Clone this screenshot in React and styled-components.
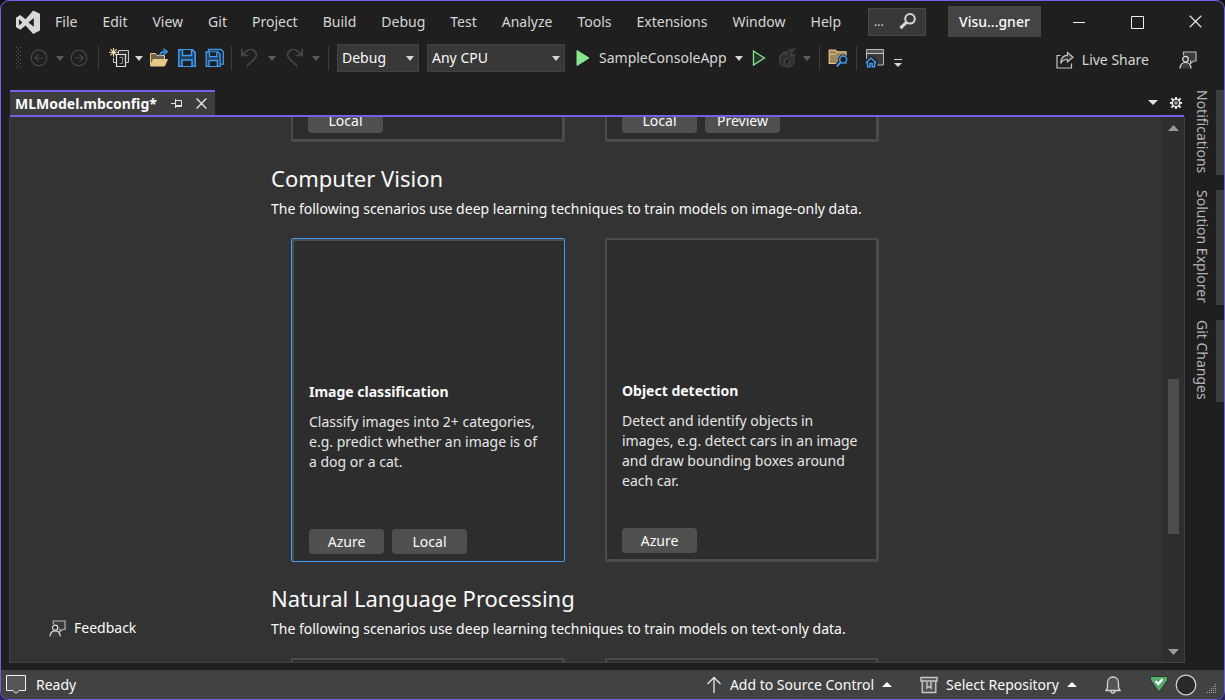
import React from "react";
import styled, { createGlobalStyle, css } from "styled-components";

const c = {
  chrome: "#1f1f1f",
  panel: "#333333",
  card: "#2d2d2d",
  edge: "#4b4b4b",
  field: "#383838",
  status: "#424242",
  purple: "#7160e8",
  blue: "#3f9cf5",
  green: "#89e58b",
  sand: "#e8c888",
  text: "#fafafa",
  soft: "#d6d6d6",
  dim: "#464646",
  dimCaret: "#5c5c5c",
};

const GlobalStyle = createGlobalStyle`
  * { box-sizing: border-box; }
  html, body { margin: 0; height: 100%; }
  body {
    background: linear-gradient(#101014 50%, #2b2760);
    font-family: "Noto Sans", "Open Sans", sans-serif;
    font-size: 14px;
    line-height: 20px;
    color: ${c.text};
  }
  button, select, input { font: inherit; color: inherit; }
  svg { display: block; flex: none; }
`;

const Window = styled.div`
  display: flex;
  flex-direction: column;
  height: 100vh;
  min-height: 400px;
  overflow: hidden;
  background: ${c.chrome};
  border: 1px solid ${c.purple};
  border-radius: 9px;
`;

const PlainButton = styled.button`
  display: flex;
  flex: none;
  align-items: center;
  justify-content: center;
  padding: 0;
  border: 0;
  background: none;
  white-space: nowrap;
`;

/* Title bar */
const TitleBar = styled.header`
  display: flex;
  flex: none;
  align-items: center;
  height: 43px;
  padding: 0 0 2px 14px;
`;

const Menu = styled.nav`
  display: flex;
  gap: 25px;
  margin: 0 27px 0 14px;
  color: ${c.soft};
`;

const SearchBox = styled.label`
  display: flex;
  align-items: center;
  justify-content: space-between;
  width: 58px;
  height: 28px;
  padding: 0 9px 0 5px;
  background: ${c.field};
  border: 1px solid #484848;
  color: ${c.soft};
`;

const SearchInput = styled.input`
  width: 16px;
  padding: 0;
  border: 0;
  outline: 0;
  background: none;
  font-size: 12px;
  &::placeholder { color: ${c.soft}; opacity: 1; }
`;

const SolutionName = styled(PlainButton)`
  height: 31px;
  margin-left: 22px;
  padding: 0 11px;
  background: #444444;
  font-weight: 500;
`;

const WindowButtons = styled.div`
  display: flex;
  margin-left: auto;
`;

const WindowButton = styled(PlainButton)`
  width: 58px;
  height: 41px;
`;

/* Toolbar */
const Toolbar = styled.div`
  display: flex;
  flex: none;
  align-items: center;
  gap: 8px;
  height: 28px;
  padding: 0 27px 0 15px;
  color: ${c.soft};
`;

const ToolGroup = styled.div`
  display: flex;
  align-items: center;
  gap: ${(p) => p.$gap || 6}px;
`;

const Divider = styled.span`
  flex: none;
  width: 1px;
  height: 24px;
  margin: 0 ${(p) => (p.$wide ? 2 : 0)}px;
  background: #3d3d3d;
`;

const SelectBox = styled.label`
  display: grid;
  align-items: center;
  width: ${(p) => p.$width}px;
  height: 28px;
  & > * { grid-area: 1 / 1; }
  & > svg { justify-self: end; margin-right: 5px; pointer-events: none; }
`;

const Select = styled.select`
  width: 100%;
  height: 100%;
  padding: 0 4px;
  appearance: none;
  border: 1px solid #424242;
  border-radius: 0;
  background: ${c.field};
  color: ${c.text};
`;

const ShareGroup = styled.div`
  display: flex;
  gap: 30px;
  margin-left: auto;
  padding-top: 4px;
`;

const LabelButton = styled(PlainButton)`
  gap: ${(p) => p.$gap || 8}px;
`;

/* Document area */
const Workspace = styled.div`
  display: flex;
  flex: 1;
  min-height: 0;
  padding: 18px 0 7px 8px;
`;

const DocumentColumn = styled.main`
  display: flex;
  flex: 1;
  flex-direction: column;
  min-width: 0;
`;

const TabStrip = styled.div`
  display: flex;
  flex: none;
  align-items: stretch;
  justify-content: space-between;
  height: 27px;
  margin: 0 1px;
  border-bottom: 2px solid ${c.purple};
`;

const DocumentTab = styled.div`
  display: flex;
  align-items: center;
  gap: 14px;
  padding: 0 8px 0 5px;
  border-top: 2px solid ${c.purple};
  background: #3d3d3d;
  font-weight: 700;
`;

const TabTools = styled.div`
  display: flex;
  align-items: center;
  gap: 12px;
  padding-right: 2px;
`;

const Panel = styled.div`
  display: flex;
  flex: 1;
  min-height: 0;
  border: 1px solid #404040;
  border-top: 0;
  background: ${c.panel};
`;

const PageGrid = styled.div`
  display: grid;
  flex: 1;
  grid-template-columns: 1fr minmax(0, 631px) 1fr;
  grid-template-rows: 100%;
  min-width: 0;
`;

const FeedbackArea = styled.aside`
  display: flex;
  align-items: flex-end;
  padding: 0 0 24px 39px;
`;

const Scenarios = styled.div`
  display: flex;
  flex-direction: column;
  gap: 22px;
  overflow: hidden;
`;

const SectionTitle = styled.h2`
  margin: 0 0 7px;
  font-size: 22px;
  line-height: 28px;
  font-weight: 400;
`;

const SectionText = styled.p`
  margin: 0 0 19px;
`;

const CardRow = styled.div`
  display: flex;
  flex: none;
  gap: 40px;
  padding: 0 20px;
  ${(p) =>
    p.$scrolledOut &&
    css`
      align-items: flex-end;
      height: 25px;
      overflow: hidden;
    `}
`;

const Card = styled.button`
  display: flex;
  flex: none;
  flex-direction: column;
  width: 274px;
  height: 324px;
  padding: 141px 14px 6px 15px;
  border: 2px solid ${c.edge};
  border-right-width: 3px;
  border-bottom-width: 3px;
  border-radius: 2px;
  background: ${c.card};
  text-align: left;
  ${(p) =>
    p.$selected &&
    css`
      padding: 143px 18px 7px 17px;
      border: 1px solid ${c.blue};
      box-shadow: inset 1px 1px 0 1px ${c.edge};
    `}
`;

const CardTitle = styled.span`
  margin-bottom: 10px;
  font-weight: 700;
`;

const CardText = styled.span`
  color: #e6e6e6;
`;

const Tags = styled.span`
  display: flex;
  gap: 8px;
  margin-top: auto;
`;

const Tag = styled.span`
  width: 75px;
  padding: 3px 0 2px;
  border-radius: 4px;
  background: #505050;
  text-align: center;
`;

const ScrollBar = styled.div`
  display: flex;
  flex: none;
  flex-direction: column;
  align-items: center;
  width: 21px;
  padding: 8px 0 7px;
  background: #2e2e2e;
`;

const ScrollTrack = styled.div`
  display: flex;
  flex: 1;
  flex-direction: column;
`;

const ScrollThumb = styled.div`
  flex: 154;
  width: 11px;
  background: #4d4d4d;
`;

const ScrollSpace = styled.div`
  flex: ${(p) => p.$share};
`;

/* Side tabs */
const SideTabs = styled.aside`
  display: flex;
  flex: none;
  flex-direction: column;
  gap: 15px;
  padding-left: 7px;
`;

const SideTab = styled.button`
  width: 32px;
  padding: 0 4px 2px 0;
  border: 0;
  border-right: 8px solid #3d3d3d;
  background: none;
  color: #b4b4b4;
  line-height: 20px;
  writing-mode: vertical-rl;
  text-align: left;
  white-space: nowrap;
`;

/* Status bar */
const StatusBar = styled.footer`
  display: flex;
  flex: none;
  align-items: center;
  height: 29px;
  padding: 0 6px 0 5px;
  background: ${c.status};
`;

const StatusEnd = styled.div`
  display: flex;
  align-items: center;
  gap: 28px;
  margin-left: auto;
`;

const StatusGroup = styled.div`
  display: flex;
  align-items: center;
  gap: ${(p) => p.$gap}px;
`;

/* Icons */
const Svg = ({ w = 20, h = 20, children, ...rest }) => (
  <svg width={w} height={h} viewBox={`0 0 ${w} ${h}`} fill="none" stroke="currentColor" aria-hidden="true" {...rest}>
    {children}
  </svg>
);

const Caret = ({ color = c.soft, up, w = 8, h = 5 }) => (
  <Svg w={w} h={h} stroke="none" fill={color}>
    <path d={up ? `M0 ${h}L${w / 2} 0L${w} ${h}Z` : `M0 0H${w}L${w / 2} ${h}Z`} />
  </Svg>
);

const Logo = () => (
  <Svg w={26} h={26} stroke="none" fill="#d8d8d8">
    <path fillRule="evenodd" d="M1 8.7L5.2 6L10.6 10.3L18.2 1.4L25 4.8V21.6L18.2 25L10.6 16.5L5.2 20.8L1 18ZM4 10.3V16.4L7.4 13.4ZM13.4 13.4L18.8 17.8V9Z" />
  </Svg>
);

const Magnifier = () => (
  <Svg w={17} h={17}>
    <circle cx="11" cy="5.8" r="4.8" strokeWidth="2" />
    <path d="M7.4 9.4L1.4 15.2" strokeWidth="3" />
  </Svg>
);

const Grip = () => (
  <Svg w={6} h={22} stroke="none" fill="#5a5a5a">
    {[0, 4, 8, 12, 16, 20].map((y) => (
      <g key={y}>
        <rect x="0" y={y} width="1" height="1" />
        <rect x="4" y={y} width="1" height="1" />
        {y < 20 && <rect x="2" y={y + 2} width="1" height="1" />}
      </g>
    ))}
  </Svg>
);

const CircleArrow = ({ right }) => (
  <Svg w={18} h={18} stroke={c.dim} strokeWidth="1.2">
    <circle cx="9" cy="9" r="7.8" />
    <path d={right ? "M4.5 9H13M9.5 5.3L13.2 9L9.5 12.7" : "M13.5 9H5M8.5 5.3L4.8 9L8.5 12.7"} />
  </Svg>
);

const NewProject = () => (
  <Svg>
    <path d="M9.5 7V2.5H19.5V14.5H16.5" fill="#303030" stroke="#c4c4c4" />
    <path d="M4.5 10V14.5H7.5" stroke="#c4c4c4" />
    <path d="M7.5 6.5H16.5V18.5H7.5Z" stroke="#e0e0e0" strokeWidth="1.2" />
    <path d="M10.5 9.5H13.5V15.5H10.5" stroke="#8a8a8a" />
    <path d="M4.5 -.2V8.8M0 4.3H9M1.4 1.2L7.6 7.4M7.6 1.2L1.4 7.4" stroke="#ead9ad" strokeWidth="1.1" />
  </Svg>
);

const OpenFolder = () => (
  <Svg>
    <path d="M1.5 17V5.5H6.5L8 7.5H15.5V11" stroke={c.sand} fill="#6f6247" />
    <path d="M1.5 18L4.2 11.5H18.5L15.5 18Z" fill={c.sand} stroke={c.sand} />
    <path d="M10.8 8.5Q10.8 3.7 16.5 3.7" stroke={c.blue} strokeWidth="1.8" />
    <path d="M14.3 .7L18.3 3.7L14.3 6.8" stroke={c.blue} strokeWidth="1.4" />
  </Svg>
);

const Save = () => (
  <Svg stroke={c.blue} strokeWidth="1.5">
    <path d="M1.8 1.8H15.5L18.2 4.5V18.2H1.8Z" fill="#24405c" />
    <path d="M5.5 2V7.5H14.5V2M5 18V12H15V18" fill={c.chrome} />
  </Svg>
);

const SaveAll = () => (
  <Svg stroke={c.blue} strokeWidth="1.3">
    <path d="M3.5 3.2V1.5H16L18.3 3.8V16.2H16" />
    <path d="M1.2 4H13L15.2 6.2V18.3H1.2Z" fill="#24405c" />
    <path d="M4.5 4.2V8.7H11.8V4.2M4 18V12.5H12.3V18" fill={c.chrome} />
  </Svg>
);

const Turn = ({ flip }) => (
  <Svg w={18} h={20} stroke={c.dim} strokeWidth="1.7">
    <g transform={flip ? "translate(18 0) scale(-1 1)" : undefined}>
      <path d="M1.8 1V7.5H8.5M2 7.2L6.2 3.3C9 .8 12.6 1 14.8 3.2C17 5.4 16.8 8.5 14.5 10.8L6.5 18.5" />
    </g>
  </Svg>
);

const Play = ({ hollow }) => (
  <Svg w={16} h={18}>
    <path d={hollow ? "M2.5 2L13.5 9L2.5 16Z" : "M2 1.5L14 9L2 16.5Z"} stroke={c.green} strokeWidth={hollow ? 1.3 : 1} fill={hollow ? "#25392a" : c.green} />
  </Svg>
);

const Flame = () => (
  <Svg stroke="#424242" strokeWidth="1.5">
    <path d="M17.5 1C12.5 1.4 9.6 3.2 9 7.2C8 6.5 7.8 5.5 8 4C4.3 6 2.5 8.5 2.6 12C2.8 16.2 5.8 19 9.8 19C14 19 17 16.2 17 12.2C17 10.5 16.3 9 17.5 6.5C15.8 6.8 14.8 7.3 14.2 8.2C13.8 5.5 15.2 3 17.5 1Z" fill="#2d2d2d" />
    <path d="M11.5 9.5C6.5 11.5 5.5 16 9.8 16.3C13.2 16.2 13.5 13.5 12 11.5" fill={c.chrome} />
  </Svg>
);

const FolderSearch = () => (
  <Svg>
    <path d="M1.2 2.2H7.5L9 3.8H18V15.5H1.2Z" fill="#9c875d" stroke={c.sand} strokeWidth="1.2" />
    <path d="M1.5 6.3H7.5L9.2 4.5" stroke={c.sand} />
    <path d="M13 14L8.8 18.4" stroke={c.chrome} strokeWidth="5" />
    <circle cx="15.2" cy="11.5" r="5" fill={c.chrome} stroke="none" />
    <circle cx="15.2" cy="11.5" r="3.5" stroke={c.blue} strokeWidth="1.5" />
    <path d="M12.8 14L8.8 18.4" stroke={c.blue} strokeWidth="2" />
  </Svg>
);

const WindowHome = () => (
  <Svg>
    <path d="M1.5 1.5H18.5V17H1.5Z" fill="#3b3b3b" stroke="#b8b8b8" />
    <path d="M2 2H18V5H2Z" fill="#555555" stroke="none" />
    <path d="M1.5 5.5H18.5" stroke="#c8c8c8" />
    <path d="M0 20V12L6 7.5L12.5 12.5V20Z" fill={c.chrome} stroke="none" />
    <path d="M.8 15L6 10L11.2 15M2.5 13.5V18.7H5V15.5H7.2V18.7H9.6V13.5" stroke={c.blue} strokeWidth="1.4" />
  </Svg>
);

const Overflow = () => (
  <Svg w={10} h={20} stroke="none" fill={c.soft}>
    <rect x="1" y="11" width="8" height="1" />
    <path d="M1 15H9L5 19Z" />
  </Svg>
);

const Share = () => (
  <Svg w={18} h={18} stroke="#c4c4c4" strokeWidth="1.2">
    <path d="M4.5 4.5H1V17H15.5V12.5" />
    <path d="M11.5 1.5L17 6.2L11.5 11V8.5C8.5 8.3 6.2 9.5 4.8 12.5C4.8 7.5 7.5 4.5 11.5 4.1Z" fill="#3a3a3a" />
  </Svg>
);

const PersonFeedback = ({ size = 18 }) => (
  <svg width={size} height={size} viewBox="0 0 18 18" fill="none" stroke="#b8b8b8" strokeWidth="1.2" aria-hidden="true">
    <path d="M4.5 4.5V1H17V10H14.5L11.5 12.5V9" fill="#3c3c3c" />
    <circle cx="6.5" cy="8.2" r="2.8" fill="#333333" stroke="#e2e2e2" />
    <path d="M1 17.5C1.3 13.2 3.5 11.5 6.5 11.5S11.7 13.2 12 17.5" fill="#3c3c3c" stroke="#e2e2e2" />
  </svg>
);

const Pin = () => (
  <Svg w={11} h={9} stroke="#e4e4e4" strokeWidth="1">
    <path d="M0 4.5H4M4.5 0V9M4.5 1.5H10.5V7.5H4.5M4.5 6.5H10.5" />
  </Svg>
);

const Cross = ({ size = 11 }) => (
  <svg width={size} height={size} viewBox="0 0 11 11" stroke="#e4e4e4" strokeWidth={size > 11 ? 1 : 1.4} aria-hidden="true">
    <path d="M.6 .6L10.4 10.4M10.4 .6L.6 10.4" />
  </svg>
);

const Gear = () => (
  <Svg w={12} h={12} stroke="#e4e4e4">
    <circle cx="6" cy="6" r="3.7" strokeWidth="1.6" />
    <circle cx="6" cy="6" r="1.2" strokeWidth="1" />
    <path d="M6 0V2M6 10V12M0 6H2M10 6H12M1.4 1.4L3.2 3.2M8.8 8.8L10.6 10.6M10.6 1.4L8.8 3.2M1.4 10.6L3.2 8.8" strokeWidth="2" />
  </Svg>
);

const Message = () => (
  <Svg stroke="#f2f2f2">
    <path d="M.5 .5H19.5V15.5H13L10 18.5L7 15.5H.5Z" fill="#555555" />
  </Svg>
);

const ArrowUp = () => (
  <Svg w={16} h={18} stroke="#e8e8e8" strokeWidth="1.3">
    <path d="M8 17V1.5M1.5 8L8 1.5L14.5 8" />
  </Svg>
);

const Repository = () => (
  <Svg w={18} h={18} stroke="#c8c8c8" strokeWidth="1.4">
    <path d="M1 1.5H17V5H1ZM2.2 5V16.5H15.8V5" fill="#555555" />
    <path d="M7 6V12L9 10.5L11 12V6" />
  </Svg>
);

const Bell = () => (
  <Svg w={16} h={18} stroke="#d6d6d6" strokeWidth="1.3">
    <path d="M1 14.5L2.5 11.5V7C2.5 3.5 4.8 1 8 1S13.5 3.5 13.5 7V11.5L15 14.5Z" fill="#555555" />
    <path d="M6 15C6 17.8 10 17.8 10 15" />
  </Svg>
);

const GreenCheck = () => (
  <Svg w={20} h={20}>
    <path d="M1.5 1.5H18.5V5L10 17L1.5 5Z" fill="#56ab6b" stroke="#23402b" strokeLinejoin="round" />
    <path d="M6.5 6L9.3 9L13.5 4" stroke="#ffffff" strokeWidth="2.2" />
  </Svg>
);

const Ring = () => (
  <Svg w={22} h={22}>
    <circle cx="11" cy="11" r="9.8" fill="#292929" stroke="#d0d0d0" strokeWidth="1.3" />
  </Svg>
);

const ResizeGrip = () => (
  <Svg w={11} h={20} stroke="none" fill="#a8a8a8">
    {[0, 1, 2, 3, 4].map((row) =>
      [0, 1, 2, 3, 4].filter((col) => col >= 4 - row).map((col) => (
        <rect key={`${row}-${col}`} x={col * 2} y={row * 2 + 9} width="1" height="1" />
      ))
    )}
  </Svg>
);

const menuItems = ["File", "Edit", "View", "Git", "Project", "Build", "Debug", "Test", "Analyze", "Tools", "Extensions", "Window", "Help"];
const sideTabs = ["Notifications", "Solution Explorer", "Git Changes"];

const Tool = ({ label, children }) => <PlainButton aria-label={label}>{children}</PlainButton>;

const Dropdown = ({ label, value, width }) => (
  <SelectBox $width={width}>
    <Select aria-label={label} defaultValue={value}>
      <option>{value}</option>
    </Select>
    <Caret />
  </SelectBox>
);

const ScenarioCard = ({ title, text, tags, selected }) => (
  <Card $selected={selected} aria-pressed={!!selected}>
    {title && <CardTitle>{title}</CardTitle>}
    {text && <CardText>{text}</CardText>}
    <Tags>
      {tags.map((tag) => (
        <Tag key={tag}>{tag}</Tag>
      ))}
    </Tags>
  </Card>
);

export default function App() {
  return (
    <>
      <GlobalStyle />
      <Window>
        <TitleBar>
          <Logo />
          <Menu>
            {menuItems.map((item) => (
              <PlainButton key={item}>{item}</PlainButton>
            ))}
          </Menu>
          <SearchBox>
            <SearchInput aria-label="Search" placeholder="..." />
            <Magnifier />
          </SearchBox>
          <SolutionName>Visu...gner</SolutionName>
          <WindowButtons>
            <WindowButton aria-label="Minimize">
              <Svg w={14} h={14} stroke="#f0f0f0"><path d="M1 7.5H13" /></Svg>
            </WindowButton>
            <WindowButton aria-label="Maximize">
              <Svg w={14} h={14} stroke="#f0f0f0"><path d="M1.5 1.5H13.5V13.5H1.5Z" /></Svg>
            </WindowButton>
            <WindowButton aria-label="Close"><Cross size={13} /></WindowButton>
          </WindowButtons>
        </TitleBar>

        <Toolbar>
          <Grip />
          <Tool label="Navigate backward"><CircleArrow /></Tool>
          <ToolGroup>
            <Tool label="Backward history"><Caret color={c.dimCaret} /></Tool>
            <Tool label="Navigate forward"><CircleArrow right /></Tool>
          </ToolGroup>
          <Divider $wide />
          <ToolGroup>
            <Tool label="New project"><NewProject /></Tool>
            <Tool label="New project options"><Caret /></Tool>
            <Tool label="Open file"><OpenFolder /></Tool>
          </ToolGroup>
          <Tool label="Save"><Save /></Tool>
          <ToolGroup>
            <Tool label="Save all"><SaveAll /></Tool>
            <Divider />
          </ToolGroup>
          <ToolGroup $gap={10}>
            <Tool label="Undo"><Turn /></Tool>
            <Tool label="Undo history"><Caret color={c.dimCaret} /></Tool>
            <Tool label="Redo"><Turn flip /></Tool>
          </ToolGroup>
          <Tool label="Redo history"><Caret color={c.dimCaret} /></Tool>
          <Divider />
          <Dropdown label="Configuration" value="Debug" width={82} />
          <ToolGroup $gap={10}>
            <Dropdown label="Platform" value="Any CPU" width={138} />
            <LabelButton>
              <Play />
              SampleConsoleApp
              <Caret />
            </LabelButton>
          </ToolGroup>
          <ToolGroup $gap={10}>
            <Tool label="Start without debugging"><Play hollow /></Tool>
            <LabelButton $gap={6} aria-label="Hot reload">
              <Flame />
              <Caret color={c.dimCaret} />
            </LabelButton>
          </ToolGroup>
          <Divider />
          <Tool label="Find in files"><FolderSearch /></Tool>
          <Divider />
          <Tool label="Window home"><WindowHome /></Tool>
          <Tool label="Toolbar options"><Overflow /></Tool>
          <ShareGroup>
            <LabelButton><Share />Live Share</LabelButton>
            <Tool label="Send feedback"><PersonFeedback /></Tool>
          </ShareGroup>
        </Toolbar>

        <Workspace>
          <DocumentColumn>
            <TabStrip>
              <DocumentTab>
                MLModel.mbconfig*
                <Tool label="Pin tab"><Pin /></Tool>
                <Tool label="Close tab"><Cross /></Tool>
              </DocumentTab>
              <TabTools>
                <Tool label="Open documents"><Caret w={10} color="#e4e4e4" /></Tool>
                <Tool label="Tab settings"><Gear /></Tool>
              </TabTools>
            </TabStrip>
            <Panel>
              <PageGrid>
                <FeedbackArea>
                  <LabelButton><PersonFeedback size={17} />Feedback</LabelButton>
                </FeedbackArea>
                <Scenarios>
                  <CardRow $scrolledOut>
                    <ScenarioCard tags={["Local"]} />
                    <ScenarioCard tags={["Local", "Preview"]} />
                  </CardRow>
                  <section>
                    <SectionTitle>Computer Vision</SectionTitle>
                    <SectionText>The following scenarios use deep learning techniques to train models on image-only data.</SectionText>
                    <CardRow>
                      <ScenarioCard
                        selected
                        title="Image classification"
                        text="Classify images into 2+ categories, e.g. predict whether an image is of a dog or a cat."
                        tags={["Azure", "Local"]}
                      />
                      <ScenarioCard
                        title="Object detection"
                        text="Detect and identify objects in images, e.g. detect cars in an image and draw bounding boxes around each car."
                        tags={["Azure"]}
                      />
                    </CardRow>
                  </section>
                  <section>
                    <SectionTitle>Natural Language Processing</SectionTitle>
                    <SectionText>The following scenarios use deep learning techniques to train models on text-only data.</SectionText>
                    <CardRow>
                      <ScenarioCard tags={[]} />
                      <ScenarioCard tags={[]} />
                    </CardRow>
                  </section>
                </Scenarios>
              </PageGrid>
              <ScrollBar>
                <Caret up w={11} h={6} color="#999999" />
                <ScrollTrack>
                  <ScrollSpace $share={248} />
                  <ScrollThumb />
                  <ScrollSpace $share={115} />
                </ScrollTrack>
                <Caret w={11} h={6} color="#999999" />
              </ScrollBar>
            </Panel>
          </DocumentColumn>
          <SideTabs>
            {sideTabs.map((tab) => (
              <SideTab key={tab}>{tab}</SideTab>
            ))}
          </SideTabs>
        </Workspace>

        <StatusBar>
          <LabelButton $gap={10}><Message />Ready</LabelButton>
          <StatusEnd>
            <LabelButton><ArrowUp />Add to Source Control<Caret up w={10} color="#ffffff" /></LabelButton>
            <LabelButton><Repository />Select Repository<Caret up w={10} color="#ffffff" /></LabelButton>
            <Tool label="Notifications"><Bell /></Tool>
            <StatusGroup $gap={10}>
              <StatusGroup $gap={6}>
                <Tool label="Service status"><GreenCheck /></Tool>
                <Tool label="Background tasks"><Ring /></Tool>
              </StatusGroup>
              <ResizeGrip />
            </StatusGroup>
          </StatusEnd>
        </StatusBar>
      </Window>
    </>
  );
}
